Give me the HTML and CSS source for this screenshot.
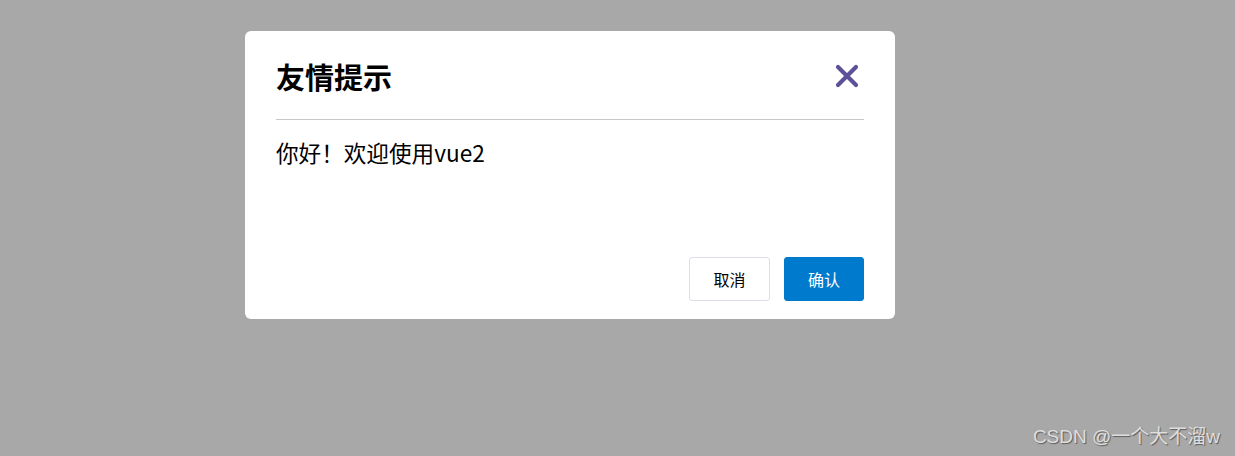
FILE: index.html
```html
<!DOCTYPE html>
<html lang="zh-CN">
<head>
<meta charset="utf-8">
<title>友情提示</title>
<link rel="stylesheet" href="styles.css">
</head>
<body>
<div class="overlay">
  <div class="dialog">
    <div class="dialog-header">
      <h2 class="dialog-title">友情提示</h2>
      <button class="close-btn" aria-label="关闭">
        <svg width="24" height="24" viewBox="0 0 24 24"><path d="M3 3 L21 21 M21 3 L3 21" stroke="#5c5199" stroke-width="4.2" stroke-linecap="round" fill="none"/></svg>
      </button>
    </div>
    <div class="dialog-body">你好！欢迎使用vue2</div>
    <div class="dialog-footer">
      <button class="btn btn-cancel">取消</button>
      <button class="btn btn-primary">确认</button>
    </div>
  </div>
  <div class="watermark">CSDN @一个大不溜w</div>
</div>
</body>
</html>
```
FILE: styles.css
```css
html, body {
  margin: 0;
  padding: 0;
  height: 100%;
}
body {
  font-family: "Noto Sans CJK SC", "Noto Sans", sans-serif;
  color: #000;
}
.overlay {
  position: relative;
  height: 100%;
  background: #a8a8a8;
  padding: 31px 0 0 245px;
  box-sizing: border-box;
}
.dialog {
  width: 650px;
  height: 288px;
  background: #fff;
  border-radius: 6px;
  display: flex;
  flex-direction: column;
}
.dialog-header {
  margin: 0 31px;
  padding: 24px 0 22px;
  border-bottom: 1px solid #c8c8c8;
  display: flex;
  align-items: center;
  justify-content: space-between;
}
.dialog-title {
  margin: 0;
  font-size: 29px;
  line-height: 42px;
  font-weight: 700;
}
.close-btn {
  border: 0;
  background: none;
  padding: 0;
  margin-right: 5px;
  display: flex;
  cursor: pointer;
}
.dialog-body {
  flex: 1;
  margin: 0 31px;
  padding-top: 16px;
  font-size: 22.6px;
  line-height: 33px;
}
.dialog-footer {
  display: flex;
  justify-content: flex-end;
  gap: 14px;
  padding: 0 31px 18px;
}
.btn {
  height: 44px;
  padding: 0 23px;
  border-radius: 3px;
  font-family: "Noto Sans CJK SC", sans-serif;
  font-size: 16px;
  border: 1px solid #dcdfe6;
  cursor: pointer;
}
.btn-cancel {
  background: #fff;
  color: #000;
  padding: 0 23.5px;
}
.btn-primary {
  background: #007acc;
  border-color: #007acc;
  color: #fff;
}
.watermark {
  position: absolute;
  right: 15px;
  bottom: 8px;
  font-family: "Liberation Sans", "Noto Sans CJK SC", sans-serif;
  font-size: 19px;
  color: #dedede;
  text-shadow: 1px 1px 1px rgba(0, 0, 0, 0.45);
}
```
